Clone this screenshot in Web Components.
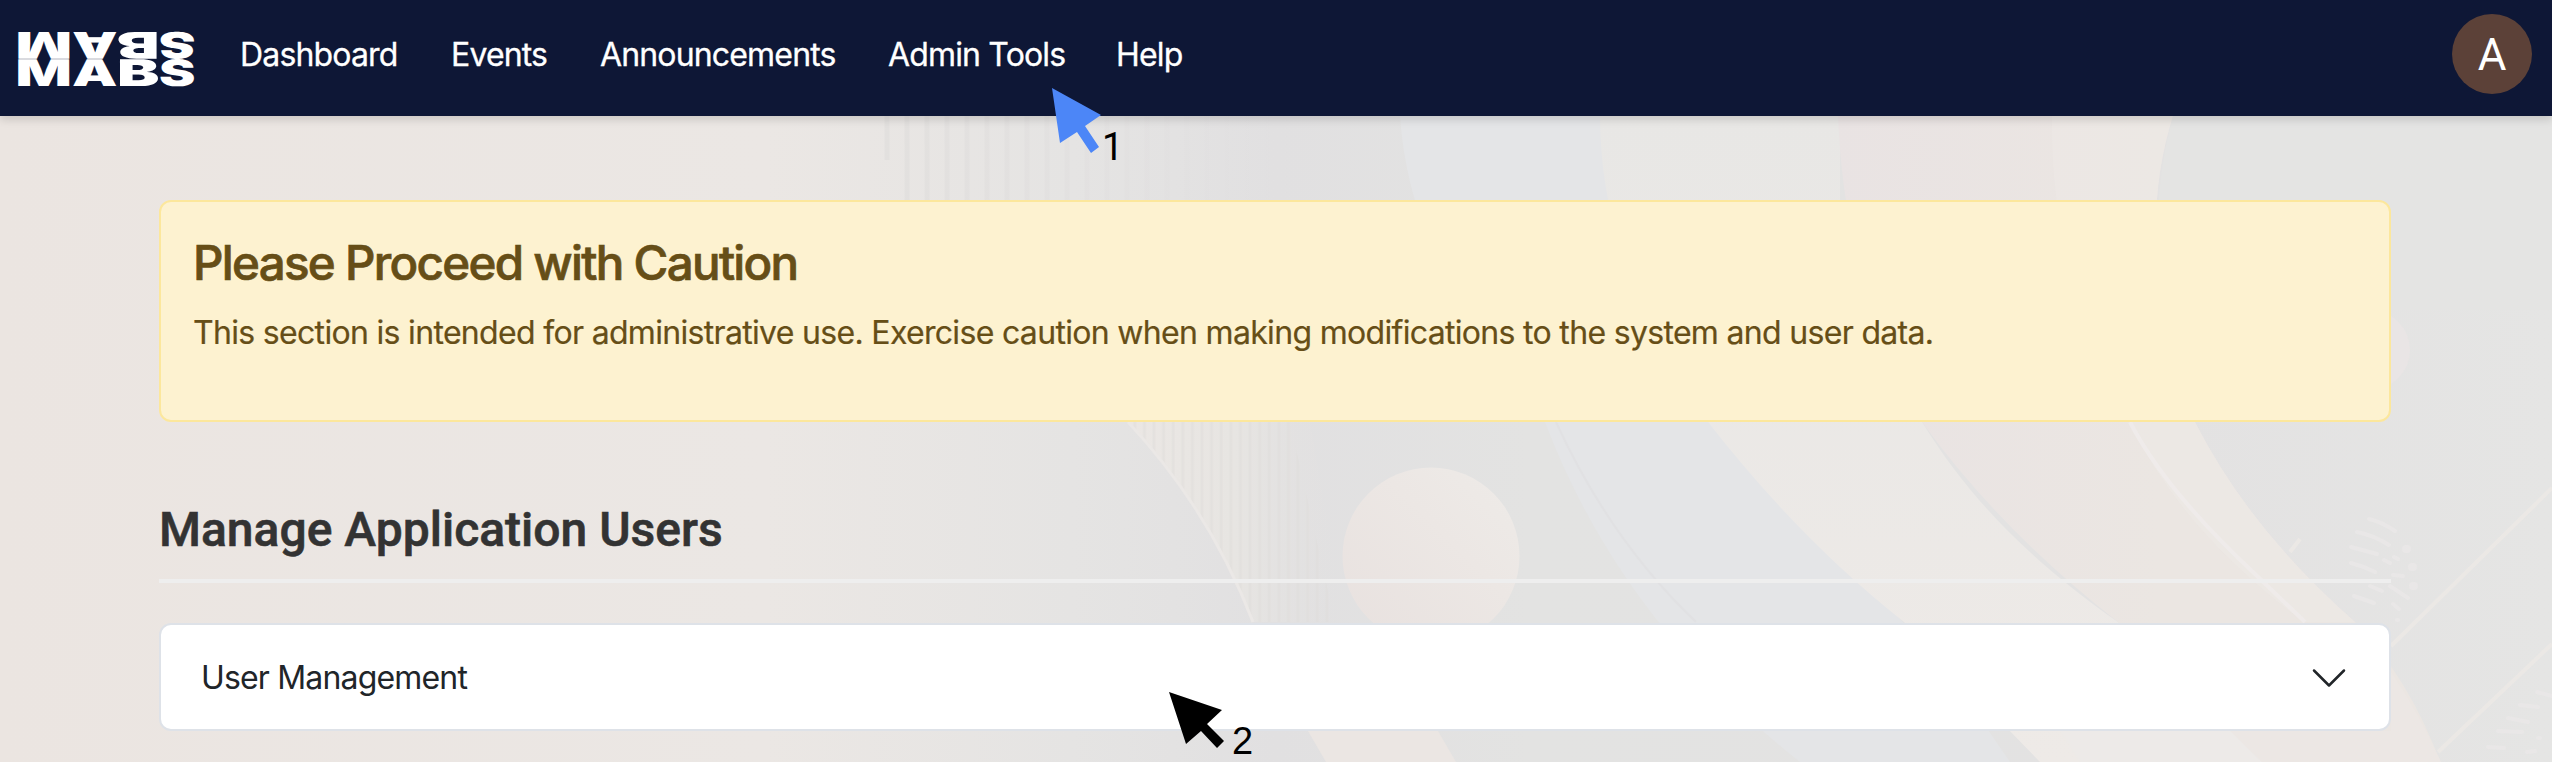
<!DOCTYPE html>
<html lang="en"><head><meta charset="utf-8"><title>MABS Admin Tools</title>
<style>html,body{margin:0;height:762px;overflow:hidden;background:#e9e6e4}</style></head><body>
<mabs-page></mabs-page>
<script>
const define=(name,html,fn)=>customElements.define(name,class extends HTMLElement{
  constructor(){super();const t=document.createElement('template');t.innerHTML=html;this.attachShadow({mode:'open'}).append(t.content.cloneNode(true));if(fn)fn(this.shadowRoot,this)}
});

/* Logo: the word with a second copy of each letter turned upside down above it */
define('mabs-logo',`<style>:host{display:block;flex:none;width:176px;height:58px}svg{display:block;overflow:visible}text{font:900 368px Inter,sans-serif;fill:#fff;text-rendering:geometricPrecision}</style>
<svg width="176" height="58" viewBox="180 300 1760 580">
<g id="row"></g></svg>`,root=>{
  const spec=[['M',155,565],['A',720,455],['B',1170,425],['S',1590,365]];
  root.querySelector('#row').innerHTML=spec.map(([c,x,w])=>['',`transform="rotate(180 ${x+w/2} 590)"`].map(r=>
    `<text x="${x}" y="863" textLength="${w}" lengthAdjust="spacingAndGlyphs" ${r}>${c}</text>`).join('')).join('');
});

define('nav-link',`<style>:host{display:block;white-space:nowrap}</style><slot></slot>`);
define('user-avatar',`<style>:host{display:flex;width:80px;height:80px;border-radius:50%;background:#5c4138;color:#fff;align-items:center;justify-content:center;font:400 44px/80px Roboto,sans-serif;margin-bottom:8px}span{position:relative;top:1px}</style><span><slot></slot></span>`);

define('top-nav',`<style>:host{display:flex;box-sizing:border-box;height:116px;background:#0e1736;align-items:center;padding:0 20px 0 18px;position:relative;box-shadow:0 4px 8px rgba(0,0,0,.13);font:400 32px/48px Inter,sans-serif;color:#fff}
nav{display:flex;margin-left:46px;flex:1;padding-bottom:6px}mabs-logo{margin-top:2px}
nav-link{flex:none;letter-spacing:-.84px;-webkit-text-stroke:.3px #fff}</style>
<mabs-logo></mabs-logo><nav>
<nav-link style="width:211px">Dashboard</nav-link>
<nav-link style="width:149px">Events</nav-link>
<nav-link style="width:288px">Announcements</nav-link>
<nav-link style="width:228px">Admin Tools</nav-link>
<nav-link>Help</nav-link></nav><user-avatar>A</user-avatar>`);

define('caution-alert',`<style>:host{display:block;box-sizing:border-box;height:222px;border:2px solid #fce79c;border-radius:12px;background:#fdf2d0;color:#664e17;padding:32px;font-family:Inter,sans-serif}
h4{margin:0 0 17px;font-size:47.5px;line-height:58px;font-weight:500;letter-spacing:-1.7px;white-space:nowrap;-webkit-text-stroke:.7px #664e17}p{margin:0;font-size:32px;line-height:48px;letter-spacing:-.68px;white-space:nowrap;-webkit-text-stroke:.2px #664e17}</style>
<h4><slot name="title"></slot></h4><p><slot></slot></p>`);

define('section-title',`<style>:host{display:block;box-sizing:border-box;height:101px;border-bottom:4px solid #eee;color:#333;font:500 48px/58px Roboto,sans-serif;white-space:nowrap}h2{margin:0;padding-top:19px;font:inherit;-webkit-text-stroke:.6px #333}</style><h2><slot></slot></h2>`);

define('accordion-item',`<style>:host{display:flex;box-sizing:border-box;height:108px;background:#fff;border:2px solid #dee2e8;border-radius:12px;align-items:center;justify-content:space-between;padding:2px 40px 0;color:#212529;font:400 32px/48px Inter,sans-serif;letter-spacing:-.83px}svg{display:block}</style>
<slot></slot><svg width="40" height="40" viewBox="0 0 16 16" fill="none" stroke="#212529" stroke-linecap="round" stroke-linejoin="round"><path d="M2 5l6 6 6-6"/></svg>`);

/* Numbered pointer placed over the page */
define('step-marker',`<style>:host{position:absolute;display:block;font:400 38px/38px var(--digit,"Liberation Sans"),sans-serif;color:#000}svg{display:block;overflow:visible}span{position:absolute}</style><svg width="50" height="66"><polygon/></svg><span></span>`,(root,el)=>{
  root.querySelector('polygon').setAttribute('points',el.getAttribute('points'));
  root.querySelector('polygon').setAttribute('fill',el.getAttribute('fill'));
  const s=root.querySelector('span');s.textContent=el.getAttribute('step');s.style.left=el.getAttribute('lx')+'px';s.style.top=el.getAttribute('ly')+'px';
});

define('page-backdrop',`<style>:host{position:absolute;inset:0;display:block}svg{display:block}</style>
<svg width="2552" height="762" viewBox="0 0 2552 762" fill="none">
<defs>
<linearGradient id="base"><stop stop-color="#ebe5e1"/><stop offset=".3" stop-color="#ebe7e4"/><stop offset=".42" stop-color="#e5e4e3"/><stop offset=".5" stop-color="#e1e0e1"/><stop offset=".6" stop-color="#e3e3e2"/><stop offset=".85" stop-color="#e3e2e2"/><stop offset="1" stop-color="#e5e5e4"/></linearGradient>
<linearGradient id="ball" x1="0" y1="1" x2="1" y2="0"><stop stop-color="#e8e1df"/><stop offset=".6" stop-color="#ece7e4"/><stop offset="1" stop-color="#eeebe8"/></linearGradient>
<linearGradient id="fade" x1="870" x2="1290" y1="0" y2="0" gradientUnits="userSpaceOnUse"><stop stop-color="#e2e0de"/><stop offset="1" stop-color="#dedcde" stop-opacity="0"/></linearGradient>
<linearGradient id="wing" x1="1130" x2="1340" y1="0" y2="0" gradientUnits="userSpaceOnUse"><stop stop-color="#ebe7e4"/><stop offset=".5" stop-color="#e7e5e2"/><stop offset="1" stop-color="#e3e1e1" stop-opacity="0"/></linearGradient>
<linearGradient id="cream" x1="0" x2="0" y1="116" y2="762" gradientUnits="userSpaceOnUse"><stop stop-color="#e8e7e5"/><stop offset="1" stop-color="#eeeae7"/></linearGradient>
<linearGradient id="rose" x1="1830" x2="2160" y1="0" y2="0" gradientUnits="userSpaceOnUse"><stop stop-color="#e9e3e3"/><stop offset="1" stop-color="#ebe6e2"/></linearGradient>
<pattern id="ribs" width="9.6" height="10" patternUnits="userSpaceOnUse"><path d="M2 0V10" stroke="#dfdcda" stroke-width="3" opacity=".45"/></pattern>
</defs>
<path fill="url(#base)" d="M0 0H2552V762H0z"/>
<g stroke="url(#fade)" stroke-width="5" id="v"></g>
<path fill="#e4e5e7" d="M1400 116H1605C1605 250 1650 350 1708 422L1940 660L2010 762H1800Q1620 620 1545 422Q1410 270 1400 116z"/>
<path fill="url(#cream)" d="M1600 116H1840V300L1922 422C1970 500 2030 560 2118 622L2270 762H2040L1904 622Q1800 540 1708 422Q1600 270 1600 116z"/>
<path fill="url(#rose)" d="M1838 116H2173Q2130 250 2195 422Q2250 530 2355 622Q2410 680 2440 762H2270L2230 731L2118 622Q2000 530 1922 422Q1845 290 1838 116z"/>
<path fill="#ede8e6" d="M2052 116H2173Q2130 250 2195 422Q2250 530 2355 622L2304 622Q2180 530 2130 422Q2050 280 2052 116z" opacity=".7"/>
<path stroke="#efebea" stroke-width="4" d="M2130 422Q2165 490 2255 574L2305 622"/>
<path fill="#e4e4e3" d="M2173 116H2552V310H2160Q2150 200 2173 116z"/>
<circle cx="2370" cy="350" r="40" fill="#e9e5e5"/>
<path fill="url(#wing)" d="M1128 422H1310L1345 622H1253Q1215 520 1128 422z"/>
<path fill="url(#ribs)" d="M1128 422H1290L1335 622H1253Q1215 520 1128 422z"/>
<path stroke="#ebe8e6" stroke-width="3" d="M1128 422Q1210 510 1253 622"/>
<circle cx="1431" cy="556" r="88.500" fill="url(#ball)"/>
<path stroke="#e1e1e3" stroke-width="2" d="M1556 422Q1610 540 1696 622"/>
<path fill="#ebe6e3" d="M1308 731H1438L1456 762H1326z"/>
<g stroke="#ebe8e5" stroke-width="4"><path d="M2552 488L2391 646M2552 644L2438 752"/><path d="M2290 552l10-13"/></g>
<path fill="#ece7e4" d="M2391 672Q2420 715 2441 762H2260L2230 731H2391z"/><path fill="#edeae8" d="M2060 731H2230L2262 762H2080z"/>
<g stroke="#e9e7e7" stroke-width="4" stroke-linecap="round"><path d="M2369 519q13 3 26 12M2357 532q16 3 32 13M2351 547l26 7M2351 563q12 3 24 9M2370 586l12 5M2354 596l20 7M2384 560l6 3M2394 557l4 2M2393 575l10 1M2390 586l18 12M2393 604l6 5M2397 620h1"/><path d="M2406 549h1M2412 567h1M2413 586h1" stroke-width="8"/><path d="M2537 692l15 4M2520 705l18 2M2508 718l20 4M2498 731l24 1M2488 747l16 1M2538 738h2M2527 752l8-1"/></g>
</svg>`,root=>{const g=root.querySelector('#v');g.innerHTML=Array.from({length:22},(_,i)=>`<path d="M${887+i*20} 116L${887.1+i*20} ${i?202:160}"/>`).join('')});

define('mabs-page',`<style>:host{display:block;position:relative;width:2552px;height:762px;overflow:hidden}main{position:relative;padding:84px 161px 0 159px}section-title{margin-top:60px}accordion-item{margin-top:40px}top-nav{z-index:1}</style>
<page-backdrop></page-backdrop><top-nav></top-nav><main>
<caution-alert><span slot="title">Please Proceed with Caution</span>This section is intended for administrative use. Exercise caution when making modifications to the system and user data.</caution-alert>
<section-title>Manage Application Users</section-title><accordion-item>User Management</accordion-item></main>
<step-marker style="left:1052px;top:88px;z-index:2;--digit:Roboto" points="0,0 49,27 33,38 47,59 39,65 25,44 8,55" fill="#4c86f7" step="1" lx="50" ly="40"></step-marker>
<step-marker style="left:1169px;top:692px;z-index:2" points="0,0 53,18 38,32 55,49 48,56 32,39 17,52" fill="#000" step="2" lx="63" ly="30"></step-marker>`);
</script></body></html>
